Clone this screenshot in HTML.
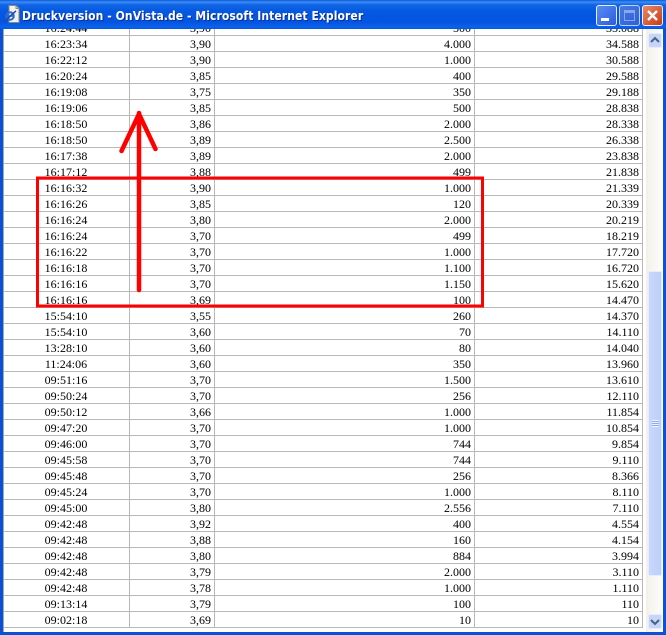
<!DOCTYPE html>
<html><head><meta charset="utf-8"><title>Druckversion - OnVista.de</title>
<style>
html,body{margin:0;padding:0;width:666px;height:635px;overflow:hidden;background:#0a50d8}
#tb{position:absolute;left:0;top:0;width:666px;height:30px;background:linear-gradient(180deg,#0a58dc 0,#3b8cf5 2px,#0f64e6 5px,#0458e0 12px,#0554e0 22px,#0a62ec 27px,#0450d0 30px)}
#ttl{position:absolute;left:22px;top:8px;font:bold 12px/16px "DejaVu Sans Condensed","DejaVu Sans",sans-serif;letter-spacing:.08px;color:#fff;text-shadow:1px 1px 0 #0a2f9c;white-space:nowrap}
.b{position:absolute;top:5px;width:21px;height:21px;box-sizing:border-box;border:1px solid #e8eefc;border-radius:3px}
#c{position:absolute;left:3px;top:29px;width:660px;height:603px;background:#fff;overflow:hidden;border-left:1px solid #a8a8a4;box-sizing:border-box}
table{position:absolute;left:-1px;top:-9px;width:640px;border-collapse:separate;border-spacing:0;table-layout:fixed;font:12px/14px "Liberation Serif",serif;color:#000}
td{height:14px;padding:1px 3px 0 0;border-bottom:1px solid #b8b8b8;border-right:1px solid #b8b8b8;text-align:right;white-space:nowrap;overflow:hidden}
td:first-child{text-align:center;padding:1px 0 0 0}
#sb{position:absolute;left:646px;top:29px;width:17px;height:603px;background:linear-gradient(90deg,#f3f1ea,#fdfdfa)}
#th{position:absolute;left:2px;top:242px;width:12px;height:303px;background:linear-gradient(90deg,#c8d7fc,#bccffa);border:1px solid #e6edfd;border-radius:2px}
#gr{position:absolute;left:3px;top:148px;width:7px;height:7px;background:repeating-linear-gradient(180deg,#eef3fe 0,#eef3fe 1px,#8faaf0 1px,#8faaf0 2px)}
.ar{position:absolute;left:2px;width:14px;height:15px;box-sizing:border-box;background:#c6d6fb;border:1px solid #e6edfd;border-radius:2px}
svg{position:absolute;left:0;top:0}
</style></head><body>
<div id="tb"></div>
<svg width="24" height="26" style="left:0;top:0"><path d="M9 5.5h7l3 3v14H9z" fill="#f4f2e6" stroke="#8c8a80"/><path d="M16 5.5v3h3" fill="none" stroke="#8c8a80"/><circle cx="10" cy="16" r="3.8" fill="none" stroke="#2a6ad8" stroke-width="2"/><path d="M6 16h8" stroke="#2a6ad8" stroke-width="1.6"/><path d="M4 21.5C7 20 13 13 16 11" stroke="#1c4cb0" stroke-width="1.6" fill="none"/></svg>
<div id="ttl">Druckversion - OnVista.de - Microsoft Internet Explorer</div>
<div class="b" style="left:596px;background:linear-gradient(135deg,#5a8cf0,#2a5ce0)"><div style="position:absolute;left:4px;top:12px;width:8px;height:3px;background:#fff"></div></div>
<div class="b" style="left:619px;background:linear-gradient(135deg,#5a80e0,#3a62d8);opacity:.8"><div style="position:absolute;left:4px;top:4px;width:11px;height:11px;box-sizing:border-box;border:1px solid #a8bcf0;border-top:3px solid #a8bcf0"></div></div>
<div class="b" style="left:642px;background:linear-gradient(135deg,#e88a6a,#c83c14)"><svg width="19" height="19"><path d="M5 5l9 9M14 5l-9 9" stroke="#fff" stroke-width="2.4"/></svg></div>
<div id="c"><table><colgroup><col style="width:127px"><col style="width:85px"><col style="width:260px"><col style="width:168px"></colgroup>
<tr><td>16:24:44</td><td>3,90</td><td>500</td><td>35.088</td></tr>
<tr><td>16:23:34</td><td>3,90</td><td>4.000</td><td>34.588</td></tr>
<tr><td>16:22:12</td><td>3,90</td><td>1.000</td><td>30.588</td></tr>
<tr><td>16:20:24</td><td>3,85</td><td>400</td><td>29.588</td></tr>
<tr><td>16:19:08</td><td>3,75</td><td>350</td><td>29.188</td></tr>
<tr><td>16:19:06</td><td>3,85</td><td>500</td><td>28.838</td></tr>
<tr><td>16:18:50</td><td>3,86</td><td>2.000</td><td>28.338</td></tr>
<tr><td>16:18:50</td><td>3,89</td><td>2.500</td><td>26.338</td></tr>
<tr><td>16:17:38</td><td>3,89</td><td>2.000</td><td>23.838</td></tr>
<tr><td>16:17:12</td><td>3,88</td><td>499</td><td>21.838</td></tr>
<tr><td>16:16:32</td><td>3,90</td><td>1.000</td><td>21.339</td></tr>
<tr><td>16:16:26</td><td>3,85</td><td>120</td><td>20.339</td></tr>
<tr><td>16:16:24</td><td>3,80</td><td>2.000</td><td>20.219</td></tr>
<tr><td>16:16:24</td><td>3,70</td><td>499</td><td>18.219</td></tr>
<tr><td>16:16:22</td><td>3,70</td><td>1.000</td><td>17.720</td></tr>
<tr><td>16:16:18</td><td>3,70</td><td>1.100</td><td>16.720</td></tr>
<tr><td>16:16:16</td><td>3,70</td><td>1.150</td><td>15.620</td></tr>
<tr><td>16:16:16</td><td>3,69</td><td>100</td><td>14.470</td></tr>
<tr><td>15:54:10</td><td>3,55</td><td>260</td><td>14.370</td></tr>
<tr><td>15:54:10</td><td>3,60</td><td>70</td><td>14.110</td></tr>
<tr><td>13:28:10</td><td>3,60</td><td>80</td><td>14.040</td></tr>
<tr><td>11:24:06</td><td>3,60</td><td>350</td><td>13.960</td></tr>
<tr><td>09:51:16</td><td>3,70</td><td>1.500</td><td>13.610</td></tr>
<tr><td>09:50:24</td><td>3,70</td><td>256</td><td>12.110</td></tr>
<tr><td>09:50:12</td><td>3,66</td><td>1.000</td><td>11.854</td></tr>
<tr><td>09:47:20</td><td>3,70</td><td>1.000</td><td>10.854</td></tr>
<tr><td>09:46:00</td><td>3,70</td><td>744</td><td>9.854</td></tr>
<tr><td>09:45:58</td><td>3,70</td><td>744</td><td>9.110</td></tr>
<tr><td>09:45:48</td><td>3,70</td><td>256</td><td>8.366</td></tr>
<tr><td>09:45:24</td><td>3,70</td><td>1.000</td><td>8.110</td></tr>
<tr><td>09:45:00</td><td>3,80</td><td>2.556</td><td>7.110</td></tr>
<tr><td>09:42:48</td><td>3,92</td><td>400</td><td>4.554</td></tr>
<tr><td>09:42:48</td><td>3,88</td><td>160</td><td>4.154</td></tr>
<tr><td>09:42:48</td><td>3,80</td><td>884</td><td>3.994</td></tr>
<tr><td>09:42:48</td><td>3,79</td><td>2.000</td><td>3.110</td></tr>
<tr><td>09:42:48</td><td>3,78</td><td>1.000</td><td>1.110</td></tr>
<tr><td>09:13:14</td><td>3,79</td><td>100</td><td>110</td></tr>
<tr><td>09:02:18</td><td>3,69</td><td>10</td><td>10</td></tr>
</table></div>
<div id="sb"><div class="ar" style="top:4px"><svg width="12" height="13"><path d="M2 8l4-4 4 4" fill="none" stroke="#4d6185" stroke-width="2"/></svg></div><div id="th"><div id="gr"></div></div><div class="ar" style="top:585px"><svg width="12" height="13"><path d="M2 5l4 4 4-4" fill="none" stroke="#4d6185" stroke-width="2"/></svg></div></div>
<svg width="666" height="635"><rect x="37.5" y="178" width="445" height="128" fill="none" stroke="#f00" stroke-width="3"/><path d="M139 290V113M121.500 151L139 114L155.500 149" fill="none" stroke="#f00" stroke-width="4.500" stroke-linecap="round" stroke-linejoin="round"/></svg>
</body></html>
